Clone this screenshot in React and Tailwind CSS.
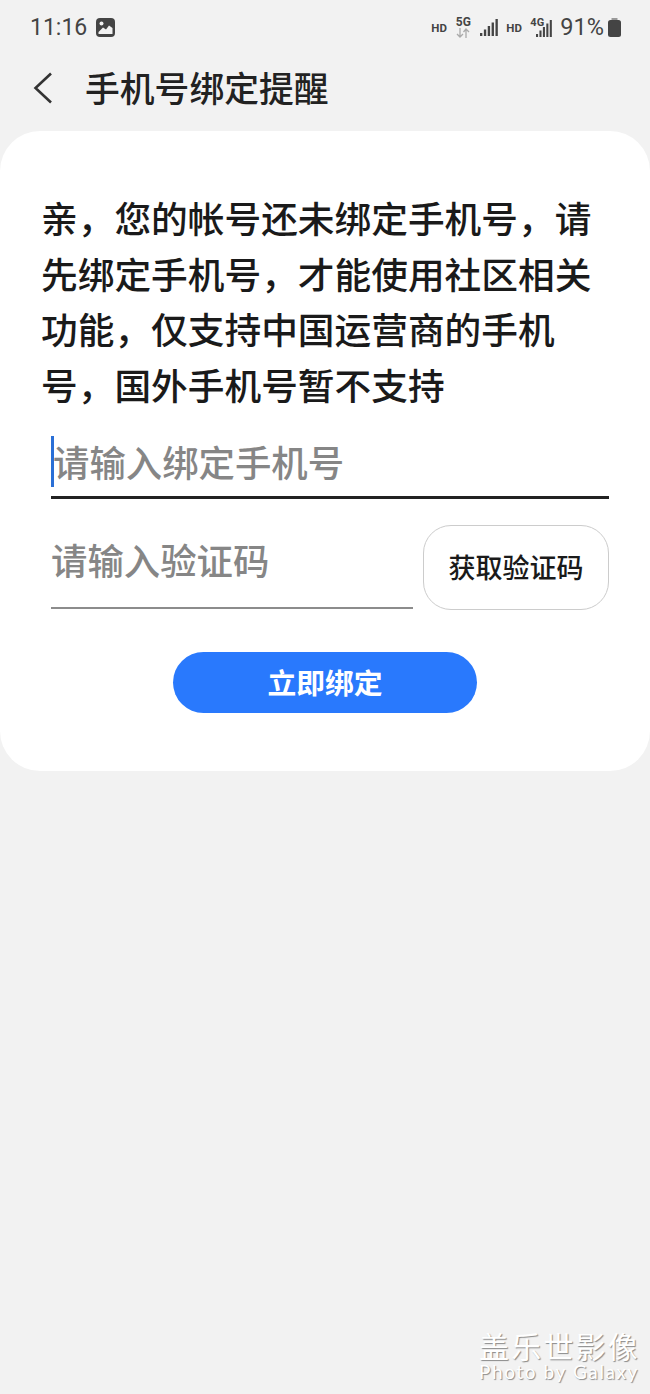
const CJK = { fontFamily: '"Noto Sans CJK SC", "Noto Sans", sans-serif' }

function Signal({ className, width = 18 }) {
  return (
    <svg className={className} width={width} height="17" viewBox="0 0 20 17" preserveAspectRatio="none" fill="#444">
      <rect x="0" y="14" width="2.6" height="3" />
      <rect x="4.3" y="10.5" width="2.6" height="6.5" />
      <rect x="8.6" y="7" width="2.6" height="10" />
      <rect x="12.9" y="3.5" width="2.6" height="13.5" />
      <rect x="17.2" y="0" width="2.6" height="17" />
    </svg>
  )
}

function StatusBar() {
  return (
    <div className="h-[55px] flex items-center justify-between pl-[30px] pr-[29px] text-[#444]" style={{ fontFamily: 'Roboto, sans-serif' }}>
      <div className="flex items-center gap-[9px]">
        <span className="text-[23px] leading-none">11:16</span>
        <svg width="19" height="19" viewBox="0 0 19 19">
          <rect x="0" y="0" width="19" height="19" rx="4" fill="#444" />
          <circle cx="5.5" cy="5.5" r="2" fill="#f2f2f2" />
          <path d="M2.5 14 L7 9.5 L10 11.5 L13 7.5 L16.5 10 V16 H2.5 Z" fill="#f2f2f2" />
        </svg>
      </div>
      <div className="flex items-center">
        <span className="w-[15px] text-[11.5px] font-bold mr-[9px] mt-[2px] whitespace-nowrap">HD</span>
        <div className="w-[16px] flex flex-col items-center mr-[9px] mt-[-1px]">
          <span className="text-[12px] font-bold leading-[11px]">5G</span>
          <svg width="16" height="10" viewBox="0 0 14 10" fill="none" stroke="#aaa" strokeWidth="1.3">
            <path d="M4 0 V9 M1 6 L4 9 L7 6" />
            <path d="M10 10 V1 M7.5 4 L10 1 L13 4" />
          </svg>
        </div>
        <Signal className="mr-[8px]" />
        <span className="w-[15px] text-[11.5px] font-bold mr-[9px] mt-[2px] whitespace-nowrap">HD</span>
        <div className="relative w-[22px] h-[19px] mr-[8px]">
          <span className="absolute left-0 top-0 text-[11px] font-bold leading-[10px]">4G</span>
          <Signal className="absolute right-0 bottom-0" width={16} />
        </div>
        <span className="text-[23.5px] leading-none mr-[4px]">91%</span>
        <svg width="13" height="19" viewBox="0 0 13 19">
          <rect x="3.5" y="0" width="6" height="3" fill="#999" />
          <rect x="0" y="2" width="13" height="17" rx="2.5" fill="#444" />
        </svg>
      </div>
    </div>
  )
}

export default function App() {
  return (
    <div className="relative w-[650px] h-[1394px] bg-[#f2f2f2] overflow-hidden" style={CJK}>
      <StatusBar />

      {/* Header */}
      <div className="h-[76px] flex items-center pl-[33px] pb-[11px]">
        <svg width="20" height="32" viewBox="0 0 20 32" fill="none" stroke="#333" strokeWidth="2.6">
          <path d="M18 1.5 L2.5 16 L18 30.5" />
        </svg>
        <h1 className="ml-[32px] text-[34.8px] leading-none font-medium text-[#222]">手机号绑定提醒</h1>
      </div>

      {/* Card */}
      <div className="h-[640px] bg-white rounded-[40px] pt-[59px]">
        <p className="pl-[41px] w-[600px] text-[36.7px] leading-[55.5px] font-medium text-[#1a1a1a]">
          亲，您的帐号还未绑定手机号，请先绑定手机号，才能使用社区相关功能，仅支持中国运营商的手机号，国外手机号暂不支持
        </p>

        <div className="ml-[51px] mr-[41px] mt-[24px] h-[63px] border-b-[3px] border-[#222] flex items-start">
          <span className="w-[3px] h-[51px] bg-[#2a6fd6]" />
          <span className="-ml-[1px] text-[36.4px] leading-[50px] font-medium text-[#868686]">请输入绑定手机号</span>
        </div>

        <div className="ml-[51px] mr-[41px] mt-[26px] flex items-start">
          <div className="w-[362px] h-[84px] border-b-2 border-[#8c8c8c] pt-[9px]">
            <span className="text-[36.4px] leading-[50px] font-medium text-[#868686]">请输入验证码</span>
          </div>
          <button className="ml-[10px] w-[186px] h-[85px] rounded-[28px] border border-[#cccccc] bg-white text-[27px] font-medium text-[#1a1a1a]">
            获取验证码
          </button>
        </div>

        <div className="mt-[42px] flex justify-center">
          <button className="w-[304px] h-[61px] pb-[2px] rounded-full bg-[#2979fd] text-white text-[28.8px] font-bold">
            立即绑定
          </button>
        </div>
      </div>

      {/* Watermark */}
      <div className="absolute left-[479px] top-[1329px] text-white [text-shadow:1px_1px_1px_#8a8a8a]">
        <div className="text-[30px] leading-[33px] tracking-[2.2px]">盖乐世影像</div>
        <div className="text-[19px] leading-[20px] tracking-[1.6px] whitespace-nowrap" style={{ fontFamily: 'Lato, sans-serif' }}>Photo by Galaxy</div>
      </div>
    </div>
  )
}
